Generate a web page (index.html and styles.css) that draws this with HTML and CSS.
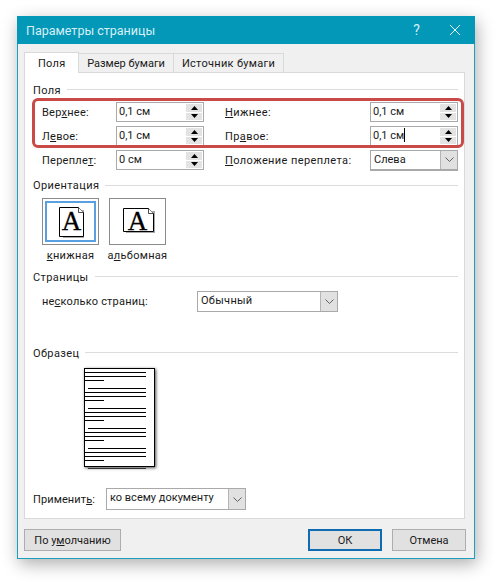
FILE: index.html
```html
<!DOCTYPE html>
<html lang="ru">
<head>
<meta charset="utf-8">
<title>Параметры страницы</title>
<link rel="stylesheet" href="styles.css">
</head>
<body>
<div class="window">
  <header class="titlebar">
    <span class="title">Параметры страницы</span>
    <span class="help">?</span>
    <svg class="close" width="12" height="12" viewBox="0 0 12 12"><path d="M1 1l10 10M11 1L1 11" stroke="#e6f5f8" stroke-width="1" fill="none"/></svg>
  </header>
  <div class="content">
    <nav class="tabs">
      <div class="tab active">Поля</div>
      <div class="tab tab-size">Размер бумаги</div>
      <div class="tab tab-source">Источник бумаги</div>
    </nav>
    <main class="panel">
      <div class="legend legend-first"><span>Поля</span><i></i></div>
      <div class="margins">
        <div class="highlight"></div>
        <div class="row">
          <label class="lab-left">Вер<u>х</u>нее:</label>
          <div class="spin"><span class="val">0,1 см</span><span class="arrows"><b><svg width="7" height="4" viewBox="0 0 7 4"><path d="M3.5 0L7 4H0z"/></svg></b><b><svg width="7" height="4" viewBox="0 0 7 4"><path d="M0 0h7L3.5 4z"/></svg></b></span></div>
          <label class="lab-right"><u>Н</u>ижнее:</label>
          <div class="spin"><span class="val">0,1 см</span><span class="arrows"><b><svg width="7" height="4" viewBox="0 0 7 4"><path d="M3.5 0L7 4H0z"/></svg></b><b><svg width="7" height="4" viewBox="0 0 7 4"><path d="M0 0h7L3.5 4z"/></svg></b></span></div>
        </div>
        <div class="row">
          <label class="lab-left">Л<u>е</u>вое:</label>
          <div class="spin"><span class="val">0,1 см</span><span class="arrows"><b><svg width="7" height="4" viewBox="0 0 7 4"><path d="M3.5 0L7 4H0z"/></svg></b><b><svg width="7" height="4" viewBox="0 0 7 4"><path d="M0 0h7L3.5 4z"/></svg></b></span></div>
          <label class="lab-right">Пр<u>а</u>вое:</label>
          <div class="spin"><span class="val caret">0,1 см</span><span class="arrows"><b><svg width="7" height="4" viewBox="0 0 7 4"><path d="M3.5 0L7 4H0z"/></svg></b><b><svg width="7" height="4" viewBox="0 0 7 4"><path d="M0 0h7L3.5 4z"/></svg></b></span></div>
        </div>
        <div class="row">
          <label class="lab-left">Перепле<u>т</u>:</label>
          <div class="spin"><span class="val">0 см</span><span class="arrows"><b><svg width="7" height="4" viewBox="0 0 7 4"><path d="M3.5 0L7 4H0z"/></svg></b><b><svg width="7" height="4" viewBox="0 0 7 4"><path d="M0 0h7L3.5 4z"/></svg></b></span></div>
          <label class="lab-right"><u>П</u>оложение переплета:</label>
          <div class="select select-gutter"><span class="val">Слева</span><span class="drop"><svg width="9" height="5" viewBox="0 0 9 5"><path d="M.5.5l4 4 4-4" stroke="#606060" fill="none"/></svg></span></div>
        </div>
      </div>
      <div class="legend legend-orient"><span>Ориентация</span><i></i></div>
      <div class="orient">
        <div class="orient-item">
          <div class="orient-btn selected">
            <svg width="27" height="35" viewBox="0 0 27 35"><g transform="translate(0 3)"><path d="M3 3h21v28H3z" fill="#a8a8a8" transform="translate(1 0)"/><path d="M.5.5h19l5 5v24H.5z" fill="#fff" stroke="#000"/><path d="M19.500.5v5h5" fill="#fff" stroke="#000" stroke-width=".7"/><text x="12.500" y="23" text-anchor="middle" class="glyph">A</text></g></svg>
          </div>
          <span class="orient-lab"><u>к</u>нижная</span>
        </div>
        <div class="orient-item">
          <div class="orient-btn">
            <svg width="33" height="35" viewBox="0 0 33 35"><g transform="translate(0 4)"><path d="M3 3h29v22H3z" fill="#a8a8a8"/><path d="M.5.5h25l5 5v18H.5z" fill="#fff" stroke="#000"/><path d="M25.500.5v5h5" fill="#fff" stroke="#000" stroke-width=".7"/><text x="14.500" y="22" text-anchor="middle" class="glyph">A</text></g></svg>
          </div>
          <span class="orient-lab">а<u>л</u>ьбомная</span>
        </div>
      </div>
      <div class="legend legend-pages"><span>Страницы</span><i></i></div>
      <div class="pages">
        <label>не<u>с</u>колько страниц:</label>
        <div class="select select-pages"><span class="val">Обычный</span><span class="drop"><svg width="9" height="5" viewBox="0 0 9 5"><path d="M.5.5l4 4 4-4" stroke="#606060" fill="none"/></svg></span></div>
      </div>
      <div class="legend legend-sample"><span>Образец</span><i></i></div>
      <div class="sample">
        <div class="sheet">
          <i class="full"></i><i class="full"></i><i class="short"></i><i class="gap"></i>
          <i class="indent"></i><i class="full"></i><i class="full"></i><i class="short"></i><i class="gap"></i>
          <i class="indent"></i><i class="full"></i><i class="full"></i><i class="short"></i><i class="gap"></i>
          <i class="indent"></i><i class="full"></i><i class="full"></i><i class="short"></i><i class="gap"></i>
          <i class="indent"></i><i class="full"></i><i class="full"></i><i class="short"></i>
        </div>
        <i class="tail"></i>
      </div>
      <div class="apply">
        <label>Применит<u>ь</u>:</label>
        <div class="select select-apply"><span class="val">ко всему документу</span><span class="drop"><svg width="9" height="5" viewBox="0 0 9 5"><path d="M.5.5l4 4 4-4" stroke="#606060" fill="none"/></svg></span></div>
      </div>
    </main>
    <footer class="footer">
      <button class="btn btn-default">По у<u>м</u>олчанию</button>
      <span class="spacer"></span>
      <button class="btn btn-ok">ОК</button>
      <button class="btn btn-cancel">Отмена</button>
    </footer>
  </div>
</div>
</body>
</html>
```

FILE: styles.css
```css
* { box-sizing: border-box; }
html, body { margin: 0; padding: 0; background: #fff; }
body { width: 496px; height: 582px; overflow: hidden; font-family: Roboto, "Open Sans", sans-serif; font-size: 11px; letter-spacing: .25px; color: #1a1a1a; }
u { text-underline-offset: 1px; }
.window { margin: 16px 0 0 17px; width: 458px; height: 543px; background: #f0f0f0; border: 1px solid #1a9fbc; border-top: 0; box-shadow: 2px 5px 16px rgba(0,0,0,.32); display: flex; flex-direction: column; }
.titlebar { height: 28px; margin: 0 -1px; background: #0397b8; color: #d8f0f5; display: flex; align-items: center; padding-left: 9px; flex: none; }
.title { font-size: 12.500px; flex: 1; letter-spacing: 0; }
.help { font-size: 14px; margin-right: 29px; }
.close { margin-right: 14px; }
.content { flex: 1; padding: 8px 9px 0 6px; display: flex; flex-direction: column; }
.tabs { display: flex; height: 20px; position: relative; z-index: 1; }
.tab { height: 20px; margin-top: 1px; background: #f0f0f0; border: 1px solid #d9d9d9; border-left: 0; line-height: 20px; text-align: center; }
.tab-size { width: 95px; letter-spacing: 0; }
.tab-source { width: 110px; letter-spacing: .3px; }
.tab.active { width: 55px; height: 21px; margin-top: 0; padding: 0 0 0 13px; background: #fff; border-left: 1px solid #d9d9d9; border-bottom: 0; line-height: 22px; text-align: left; }
.panel { height: 447px; flex: none; background: #fff; border: 1px solid #d9d9d9; padding: 0 6px 0 8px; }
.legend { display: flex; align-items: center; gap: 6px; height: 16px; letter-spacing: .4px; }
.legend span { white-space: nowrap; padding-top: 2px; }
.legend i { flex: 1; height: 1px; background: #dcdcdc; }
.legend-first { margin-top: 8px; }
.margins { position: relative; padding: 5px 0 0 9px; }
.highlight { position: absolute; left: -1px; top: 1px; width: 432px; height: 50px; border: 3px solid #c94a47; border-radius: 6px; z-index: 2; pointer-events: none; }
.row { display: flex; align-items: center; height: 20px; margin-bottom: 4px; }
.row:first-of-type { margin-bottom: 3px; }
.lab-left { width: 74px; flex: none; }
.lab-right { width: 145px; margin-left: 21px; flex: none; white-space: nowrap; letter-spacing: .4px; }
.spin, .select { display: flex; align-items: stretch; background: #fff; border: 1px solid #a9a9a9; height: 20px; }
.spin { width: 88px; }
.val { flex: 1; padding-left: 2px; line-height: 18px; white-space: nowrap; letter-spacing: 0; }
.caret::after { content: ""; display: inline-block; width: 1px; height: 14px; background: #000; vertical-align: -3px; }
.arrows { width: 16px; margin: 1px 1px 1px 0; display: flex; flex-direction: column; gap: 1px; }
.arrows b { flex: 1; background: #e3e3e3; display: flex; align-items: center; justify-content: center; }
.arrows svg { display: block; fill: #000; }
.select .val { padding-left: 3px; }
.drop { width: 17px; background: #e1e1e1; border-left: 1px solid #b5b5b5; display: flex; align-items: center; justify-content: center; }
.select-gutter { width: 88px; border-width: 1px 1px 2px; height: 21px; }
.select-pages { width: 141px; height: 21px; }
.select-pages .val { letter-spacing: .3px; }
.select-apply { width: 140px; height: 22px; }
.legend-orient { margin-top: 7px; }
.legend-orient span { padding-top: 0; }
.orient { display: flex; gap: 10px; margin: 5px 0 0 9px; }
.orient-item { width: 57px; display: flex; flex-direction: column; align-items: center; }
.orient-btn { width: 57px; height: 47px; border: 1px solid #8a8a8a; background: #fff; display: flex; align-items: center; justify-content: center; position: relative; }
.orient-btn svg { margin-left: 4px; }
.orient-btn.selected::before { content: ""; position: absolute; inset: 2px; border: 2px solid #5a9fe0; }
.orient-lab { margin-top: 3px; line-height: 16px; white-space: nowrap; letter-spacing: .3px; }
.glyph { font-family: "Liberation Serif", serif; font-size: 27px; font-weight: 400; letter-spacing: 0; fill: #000; stroke: #000; stroke-width: .3px; }
.legend-pages { margin-top: 4px; }
.pages { display: flex; align-items: center; margin: 7px 0 0 9px; }
.pages label { width: 155px; letter-spacing: .2px; }
.legend-sample { margin-top: 32px; }
.sample { position: relative; width: 70px; height: 107px; margin: 8px 0 0 51px; }
.sheet { width: 71px; height: 99px; background: #fff; border: 1px solid #000; box-shadow: 1px 1px 3px rgba(0,0,0,.7); padding-top: 3px; display: flex; flex-direction: column; gap: 3px; overflow: hidden; }
.sheet i { display: block; height: 1px; background: #000; flex: none; }
.sheet .full { width: 61px; }
.sheet .short { width: 19px; }
.sheet .indent { width: 58px; margin-left: 3px; }
.sheet .gap { background: none; }
.tail { position: absolute; left: 4px; top: 100px; width: 58px; height: 1px; background: #333; }
.apply { display: flex; align-items: center; margin: 13px 0 0 0; }
.apply label { width: 73px; letter-spacing: .1px; }
.footer { display: flex; gap: 10px; margin: 10px -1px 0 0; }
.btn { height: 22px; margin: 0; padding: 0; border: 1px solid #adadad; background: #e1e1e1; font: inherit; letter-spacing: 0; color: inherit; }
.btn-default { width: 97px; }
.spacer { flex: 1; }
.btn-ok { width: 74px; border: 2px solid #0f6cb3; }
.btn-cancel { width: 74px; }
```
